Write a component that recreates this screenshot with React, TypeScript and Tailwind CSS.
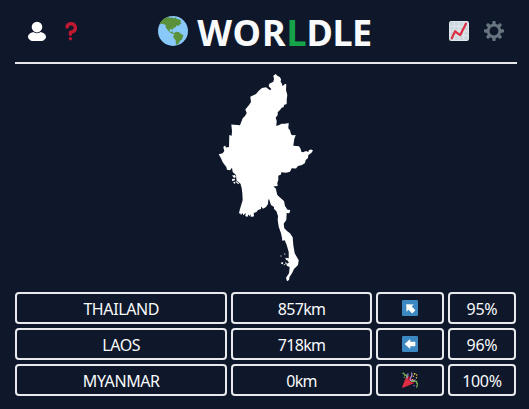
import React from "react";

function UserIcon() {
  return (
    <svg viewBox="0 0 20 20" className="h-5 w-5" fill="#ffffff">
      <ellipse cx="10" cy="15.7" rx="9.1" ry="5.2" />
      <circle cx="10" cy="6.1" r="6.2" fill="#0f172a" />
      <circle cx="10" cy="6.1" r="5.3" />
    </svg>
  );
}

function QuestionIcon() {
  return (
    <svg viewBox="0 0 36 36" className="h-5 w-5" fill="#be1931">
      <path d="M17 27c-1.657 0-3-1.343-3-3v-4c0-1.657 1.343-3 3-3 .603-.006 6-1 6-5 0-2-2-4-5-4-2.441 0-4 2-4 3 0 1.657-1.343 3-3 3s-3-1.343-3-3c0-4.878 4.58-9 10-9 8 0 11 5.982 11 11 0 4.145-2.277 7.313-6.413 8.92-.9.351-1.79.587-2.587.747V24c0 1.657-1.343 3-3 3z" />
      <circle cx="17" cy="32" r="3" />
    </svg>
  );
}

function GlobeIcon() {
  return (
    <svg viewBox="0 0 36 36" className="h-[30px] w-[30px]">
      <circle cx="18" cy="18" r="18" fill="#88c9f9" />
      <g fill="#5c913b">
        <path d="M1.8 10.2C3.2 7 5.2 4.6 8 2.8L12 1.3l2.3 1.2 2-1 2.8 1.5 2.2-1.5 1.2 2 3.4.7 1.8 1.8-.8 1.5 1.4 1.8-2.8 1.2-.4 1.5-2.7-1-1.3 2.5-2.6 1-1.2 2.7-1.2-1.7-2 .7-.3 2 2 1 1.6-1.2.4 2 1.8.7-.4 1.2-3.2-1.3-2.6-1.7-2.2-2.6-2-2.7.1-2.7L5 9.2z" />
        <path d="M19.3 20.3l2.2-1.4 3 .2 2.2 1.4.8 1.2 3 1.5-.8 2.5-1.4 3.2-2 .9-1 2.3-2 2.5-1.8-.4-.4-5.5-2.2-2-.8-2.2 1.3-1.6z" />
      </g>
    </svg>
  );
}

function ChartIcon() {
  return (
    <svg viewBox="0 0 36 36" className="h-5 w-5">
      <rect width="36" height="36" rx="4" fill="#e1e8ed" />
      <rect x="2" y="2" width="32" height="32" rx="2" fill="#ccd6dd" />
      <path d="M9.5 2v32M18 2v32M26.5 2v32M2 9.5h32M2 18h32M2 26.5h32" stroke="#e1e8ed" strokeWidth="2" />
      <path d="M5 31l6-12.5 9 7L30.5 5" fill="none" stroke="#dd2e44" strokeWidth="4" strokeLinecap="round" strokeLinejoin="round" />
    </svg>
  );
}

function GearIcon() {
  return (
    <svg viewBox="0 0 36 36" className="h-5 w-5" fill="#66757f">
      <path d="M34 15h-3.362c-.324-1.369-.864-2.651-1.582-3.814l2.379-2.379c.781-.781.781-2.048 0-2.829l-1.414-1.414c-.781-.781-2.047-.781-2.828 0l-2.379 2.379C23.65 6.225 22.369 5.686 21 5.362V2c0-1.104-.896-2-2-2h-2c-1.104 0-2 .896-2 2v3.362c-1.369.324-2.651.864-3.814 1.582L8.808 4.565c-.781-.781-2.048-.781-2.828 0L4.565 5.979c-.781.781-.781 2.048-.001 2.829l2.379 2.379C6.225 12.35 5.686 13.632 5.362 15H2c-1.104 0-2 .896-2 2v2c0 1.104.896 2 2 2h3.362c.324 1.368.864 2.65 1.582 3.813l-2.379 2.379c-.78.78-.78 2.048.001 2.829l1.414 1.414c.78.78 2.047.78 2.828 0l2.379-2.379c1.163.719 2.445 1.258 3.814 1.582V34c0 1.104.896 2 2 2h2c1.104 0 2-.896 2-2v-3.362c1.368-.324 2.65-.864 3.813-1.582l2.379 2.379c.781.781 2.047.781 2.828 0l1.414-1.414c.781-.781.781-2.048 0-2.829l-2.379-2.379c.719-1.163 1.258-2.445 1.582-3.814H34c1.104 0 2-.896 2-2v-2C36 15.896 35.104 15 34 15zM18 26c-4.418 0-8-3.582-8-8s3.582-8 8-8 8 3.582 8 8-3.582 8-8 8z" />
    </svg>
  );
}

function ArrowIcon({ angle }: { angle: number }) {
  return (
    <svg viewBox="0 0 36 36" className="h-4 w-4">
      <rect width="36" height="36" rx="3" fill="#3b88c3" />
      <path d="M6 18L18.5 6.5v6.3H30v10.4H18.5v6.3z" fill="#ffffff" transform={`rotate(${angle} 18 18)`} />
    </svg>
  );
}

function PartyIcon() {
  return (
    <svg viewBox="0 0 36 36" className="h-4 w-4">
      <path d="M10 9L.4 33.6c-.3 1.4.8 2.4 2.2 2L28 25z" fill="#dd2e44" />
      <ellipse cx="19" cy="17" rx="3.6" ry="11" transform="rotate(-45 19 17)" fill="#a0041e" />
      <path d="M18 17c1-6 6-7 4-15M19 19c6-2 5 3 10-1" fill="none" stroke="#aa8dd8" strokeWidth="2.8" strokeLinecap="round" />
      <path d="M2 3c5-2 1 6 6 4s0 6 4 6M21 22c2-3 5 0 6-1s3 1 5 0 0 6 2 5 0 5-1 8" fill="none" stroke="#77b255" strokeWidth="2.8" strokeLinecap="round" />
      <path d="M11 14c5-5 0-8 3-11" fill="none" stroke="#aa8dd8" strokeWidth="2.5" />
      <g fill="#ffcc4d">
        <circle cx="25.5" cy="9.5" r="1.7" />
        <circle cx="28.5" cy="4" r="2" />
        <circle cx="33" cy="7" r="1.7" />
        <circle cx="32.5" cy="13" r="1.7" />
        <circle cx="24" cy="17" r="1.5" />
      </g>
      <circle cx="5" cy="12" r="1.8" fill="#5c913b" />
      <circle cx="27" cy="31" r="1.8" fill="#9266cc" />
    </svg>
  );
}

function CountryShape() {
  return (
    <svg viewBox="216 72 100 212" className="h-[212px] w-[100px]" fill="#ffffff">
      <path d="M275.7 74L277.3 75.7 279.7 77 281 79 280.7 82 282 83.7 282.3 86 284 85 285 83.7 286.3 84.3 286 90 287.3 95 286.7 100 286.7 104 284 105 283.7 107 281.7 107.7 280 110 277.7 112.3 277.7 115 275.7 117.7 276.7 121 276.3 126 278.5 125.3 281.7 123.7 285 123.7 288.7 123 288.3 128.3 290 130.3 291 134.3 292.5 135.3 295.7 135 294.3 139 293.3 145.7 299 146.3 300.7 149 301.3 151.7 303 152.3 306 151 308.3 152 309 150 311.3 149.5 313 150.5 311.3 153 308.3 155 308 158 305.7 160 305 163 302 165 298 166 296 168.5 291.7 168.3 290 171.7 286 172.7 281.3 172.3 281 174.5 278.3 175.7 278.3 180 277.3 183 277.7 186 273.3 186.5 276 188.7 276.3 191 277.3 195 280 197.5 284 201 285 206 287.5 209.7 290.3 210 289.3 213.3 286.7 213 286.3 220 283.7 223.7 284.3 228.3 287 231 290 233.3 292.7 237.3 293.3 245 294.7 253.3 298.7 260.3 298 265 294 269 292 273.3 289.5 277 289 280 287 281.3 286 277.7 289 273.3 289.7 267 287 266 286.5 264 289 262.5 287 260 288.7 258 288.7 252 286.7 245 284.7 240.3 282.3 240.7 282 238 281 233.3 278.7 226.7 277.7 220 278 216 276.3 211 274 209 274 207 271 205 269 199 268.3 200 268 204 266 207 263 208.7 261 206.5 261 209 258 210 256.5 212 253.7 213 254 216.3 251.5 217 250 214 250.3 217 248.5 214.5 247.3 217 245.3 216 245.7 213 243.3 215.3 242.5 213 241 215 240 213 238.8 213.7 240 209 242.7 200 242.3 193 241.7 188.3 240.5 183.7 236.5 180.5 236 175 232.7 172 232 167.7 230 170.3 227 169.7 226.3 167 222.7 162.3 221 158.3 218.7 154.3 222.7 153.3 224.3 151 223.3 147 225 145.5 226 147.5 229 147 229.3 135 231.7 135.7 232 131 231.3 124.5 240 125.3 242.7 118.3 245 116 246.7 113 245.3 109.5 249 105 251 102 250.3 96.7 256 94 259 90.5 262 88 266 87.3 270 90.3 271.3 89 268.7 86.3 269.3 83.7 273.3 81.7 274 79 273.3 75.7z" />
      <path d="M232 175.5l3-.5 1 2-2 1zM232 179l3-.3-.2 1.6-2.5 1zM233 182.5l2.5-1-.5 2.5zM236.5 181l2.5 2.5-.7.8-2.3-2zM284 253.5l1.5.3-.5 1.5zM280.5 255.5h1v1h-1zM285.3 257.7l3 .5-.2 1.4-2 .7zM281 262.5l2.2-.2-.3 2-1.5-.4zM285.5 261.5l1.5 2.5-1.5.4zM283.6 264l1.5.5-.5 1z" />
    </svg>
  );
}

function Cell({ className, children }: { className: string; children: React.ReactNode }) {
  return (
    <div className={`flex h-8 items-center justify-center rounded border-2 border-[#e9eaee] ${className}`}>
      {children}
    </div>
  );
}

const guesses = [
  { name: "THAILAND", distance: "857km", icon: <ArrowIcon angle={45} />, proximity: "95%" },
  { name: "LAOS", distance: "718km", icon: <ArrowIcon angle={0} />, proximity: "96%" },
  { name: "MYANMAR", distance: "0km", icon: <PartyIcon />, proximity: "100%" },
];

export default function App() {
  return (
    <div className="h-[409px] w-[529px] overflow-hidden bg-[#0f172a] pr-3 pl-[15px] font-['Noto_Sans',sans-serif] text-[#f8fafc]">
      <header className="flex h-16 items-center justify-between border-b-2 border-[#e5e7eb] pr-[13px] pl-3">
        <div className="flex items-center gap-[14px]">
          <UserIcon />
          <QuestionIcon />
        </div>
        <div className="flex items-center gap-[9px]">
          <GlobeIcon />
          <h1 className="pt-[3px] text-4xl leading-10 font-bold">
            <span className="tracking-[0.9px]">WOR</span>
            <span className="text-[#16a34a]">L</span>
            <span className="tracking-[-0.5px]">DLE</span>
          </h1>
        </div>
        <div className="flex items-center gap-[15px]">
          <ChartIcon />
          <GearIcon />
        </div>
      </header>
      <div className="flex justify-center pt-2 pb-2">
        <CountryShape />
      </div>
      <div className="mr-px flex flex-col gap-1">
        {guesses.map((g) => (
          <div key={g.name} className="grid grid-cols-7 gap-1">
            <Cell className="col-span-3 pt-0.5 tracking-[-0.4px]">{g.name}</Cell>
            <Cell className="col-span-2 pt-0.5 tracking-[-0.7px]">{g.distance}</Cell>
            <Cell className="col-span-1">{g.icon}</Cell>
            <Cell className="col-span-1 pt-0.5 tracking-[-0.3px]">{g.proximity}</Cell>
          </div>
        ))}
      </div>
    </div>
  );
}
